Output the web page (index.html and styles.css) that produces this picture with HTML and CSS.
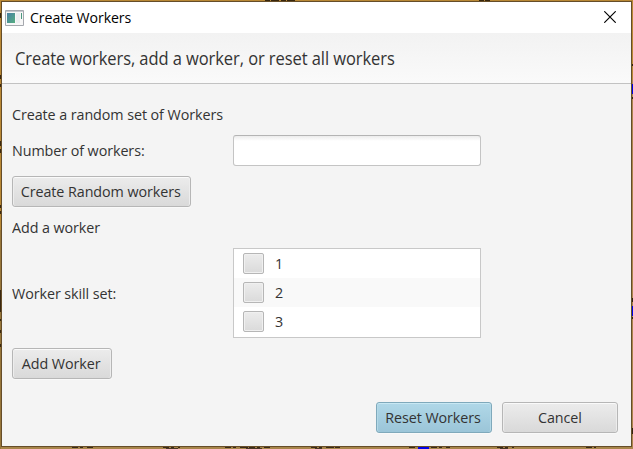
FILE: index.html
```html
<!DOCTYPE html>
<html lang="en">
<head>
<meta charset="utf-8">
<title>Create Workers</title>
<link rel="stylesheet" href="styles.css">
</head>
<body>
<svg class="desktop" viewBox="0 0 633 449" aria-hidden="true">
  <path d="M0 0H633V449H0Z" fill="#b98835"/>
  <path d="M0 447H633V449H0Z" fill="#a8854a"/>
  <path d="M632 80V449" stroke="#ae854d" stroke-width="2"/>
  <path d="M0 230V449" stroke="#97763a" stroke-width="2"/>
  <path d="M265 .5H296M479 .5H490" stroke="#37260d" stroke-dasharray="5 1 8 2"/>
  <path d="M.5 13V18M.5 75V79M.5 84V87M.5 141V146M.5 149V153M.5 205V208M.5 211V214M.5 290V312M.5 319V321M.5 330V333M.5 344V347" stroke="#3a2810"/>
  <path d="M632.5 64V66M632.5 97V99M632.5 298V302M632.5 317V319M632.5 428V434" stroke="#33230f"/>
  <path d="M632.5 84V94M632.5 306V316" stroke="#0000e8"/>
  <path d="M72 447.5H93M163 447.5H180M225 447.5H270M311 447.5H340M409 447.5H416M431 447.5H450M497 447.5H514M586 447.5H596" stroke="#3a2a19" stroke-dasharray="6 2 3 4 8 1"/>
  <path d="M166 448.5H178M246 448.5H262M315 448.5H322M500 448.5H508" stroke="#4a3722"/>
  <path d="M418 448H429" stroke="#0000e8" stroke-width="2"/>
</svg>
<main class="window">
  <div class="titlebar">
    <svg class="app-icon" width="19" height="16" viewBox="0 0 19 16">
      <defs><linearGradient id="g" x2="1" y2="1"><stop stop-color="#477fa5"/><stop offset="1" stop-color="#55ae80"/></linearGradient></defs>
      <path d="M.5 .5H18.5V15.5H.5Z" fill="#f7f7f7" stroke="#a5a8ae"/>
      <path d="M1 1.5H18" stroke="#c5c8ce"/>
      <path d="M2 3H10V13H2Z" fill="url(#g)"/>
      <path d="M11 3H15V13H11Z" fill="#eceef0"/>
      <path d="M16.5 3V9" stroke="#4b987f"/>
    </svg>
    <span class="text title">Create Workers</span>
    <svg class="close" width="12" height="12" viewBox="0 0 12 12"><path d="M.3 .3L11.7 11.7M11.7 .3L.3 11.7" stroke="#000" stroke-width="1.15"/></svg>
  </div>
  <header class="header"><span class="text heading">Create workers, add a worker, or reset all workers</span></header>
  <section class="form">
    <div class="row caption"><span class="text">Create a random set of Workers</span></div>
    <div class="row field"><span class="label"><span class="text">Number of workers:</span></span><input class="input" type="text" aria-label="Number of workers"></div>
    <div class="row"><button class="btn create"><span class="text">Create Random workers</span></button></div>
    <div class="row caption second"><span class="text">Add a worker</span></div>
    <div class="row skills"><span class="label"><span class="text">Worker skill set:</span></span>
      <ul class="list">
        <li><span class="box"></span><span class="text">1</span></li>
        <li><span class="box"></span><span class="text">2</span></li>
        <li><span class="box"></span><span class="text">3</span></li>
      </ul>
    </div>
    <div class="row"><button class="btn add"><span class="text">Add Worker</span></button></div>
  </section>
  <footer class="actions">
    <button class="btn wide primary"><span class="text">Reset Workers</span></button>
    <button class="btn wide"><span class="text">Cancel</span></button>
  </footer>
</main>
</body>
</html>
```
FILE: styles.css
```css
* { box-sizing: border-box; }
body {
  margin: 0;
  padding: 1px 1px 2px;
  width: 633px;
  height: 449px;
  overflow: hidden;
  font: 15px/20px "Open Sans", "Noto Sans", sans-serif;
  letter-spacing: -0.08px;
  color: #333;
}
.desktop { position: absolute; left: 0; top: 0; width: 633px; height: 449px; z-index: -1; }
.window {
  display: flex;
  flex-direction: column;
  width: 631px;
  height: 446px;
  border: 1px solid #654d29;
  background: #f4f4f4;
  white-space: nowrap;
}
/* Condensed interface lettering */
.text {
  display: inline-block;
  margin-top: -2px;
  transform: scaleX(0.955);
  transform-origin: left center;
}
.titlebar {
  display: flex;
  align-items: center;
  height: 31px;
  padding: 0 15px 0 3px;
  background: #fff;
  color: #000;
}
.title { margin: -1px 0 0 6px; font-size: 14.8px; }
.close { margin-left: auto; margin-top: -1px; }
.header {
  display: flex;
  align-items: center;
  height: 51px;
  padding: 1px 13px 0;
  border-bottom: 1px solid #c2c2c2;
  background: linear-gradient(#f2f2f2, #fafafa);
}
.heading { font-size: 17.8px; transform: scaleX(0.928); }
.form { display: flex; flex-direction: column; gap: 10px; padding: 21px 10px 0; }
.row { display: flex; align-items: center; }
.caption { height: 20px; }
.second { height: 21px; }
.field { height: 31px; }
.field .label { padding-bottom: 1px; }
.skills { height: 90px; }
.label { width: 221px; }
.input {
  width: 248px;
  height: 31px;
  padding: 0 8px;
  border: 1px solid #c4c4c4;
  border-top-color: #b4b4b4;
  border-radius: 3px;
  background: linear-gradient(#ececec, #fff 5px);
  font: inherit;
  outline: none;
}
.btn {
  height: 31px;
  padding: 0 1px 0 0;
  border: 1px solid #b6b6b6;
  border-radius: 3px;
  background: linear-gradient(#ececec, #d9d9d9);
  box-shadow: inset 0 1px #fafafa, inset 1px 0 #ededed, inset -1px 0 #ededed, 0 1px #f9f9f9;
  font: inherit;
  letter-spacing: inherit;
  color: #333;
}
.btn .text { margin: -3px -10px 0; padding-bottom: 1px; transform-origin: center; }
.create { width: 179px; }
.add { width: 100px; }
.wide { width: 116px; }
.primary {
  border-color: #7fa9bb;
  background: linear-gradient(#b0d8e8, #9bc5d8);
  box-shadow: inset 0 1px #c8e8f3, inset 1px 0 #b4d9e7, inset -1px 0 #b4d9e7, 0 1px #f9f9f9;
}
.list {
  width: 248px;
  height: 90px;
  margin: 0;
  padding: 0;
  list-style: none;
  border: 1px solid #c8c8c8;
  background: #fff;
}
.list li { display: flex; align-items: center; height: 29px; padding-left: 9px; }
.list li:nth-child(2) { background: #f9f9f9; }
.box {
  width: 21px;
  height: 21px;
  margin-right: 11px;
  border: 1px solid #b6b6b6;
  border-radius: 2px;
  background: linear-gradient(#ececec, #dadada);
  box-shadow: inset 0 0 0 1px #f0f0f0;
}
.actions { display: flex; justify-content: flex-end; gap: 10px; margin-top: 23px; padding-right: 13px; }
```
